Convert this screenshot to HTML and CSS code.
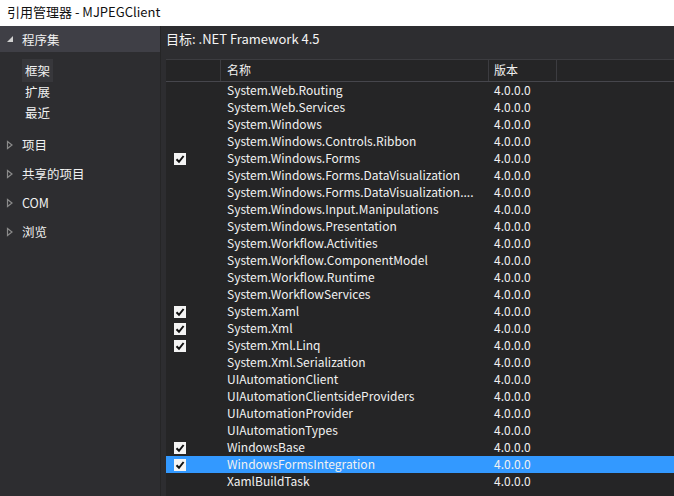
FILE: index.html
```html
<!DOCTYPE html>
<html lang="zh-CN">
<head>
  <meta charset="UTF-8">
  <title>引用管理器 - MJPEGClient</title>
  <link rel="stylesheet" href="styles.css">
</head>
<body>

  <!-- TITLE BAR -->
  <div class="titlebar">引用管理器 - MJPEGClient</div>

  <div class="main">

    <!-- LEFT TREE -->
    <aside class="sidebar">
      <div class="group open">
        <svg class="arrow" width="8" height="8" viewBox="0 0 8 8"><path d="M7 1 L7 7 L1 7 Z" fill="#d0d0d0"/></svg>
        程序集
      </div>
      <ul class="sub">
        <li><span class="current">框架</span></li>
        <li><span>扩展</span></li>
        <li><span>最近</span></li>
      </ul>
      <div class="group">
        <svg class="arrow" width="8" height="10" viewBox="0 0 8 10"><path d="M1.5 1.5 L6 5 L1.5 8.5 Z" fill="none" stroke="#8a8a8a" stroke-width="1.2"/></svg>
        项目
      </div>
      <div class="group">
        <svg class="arrow" width="8" height="10" viewBox="0 0 8 10"><path d="M1.5 1.5 L6 5 L1.5 8.5 Z" fill="none" stroke="#8a8a8a" stroke-width="1.2"/></svg>
        共享的项目
      </div>
      <div class="group">
        <svg class="arrow" width="8" height="10" viewBox="0 0 8 10"><path d="M1.5 1.5 L6 5 L1.5 8.5 Z" fill="none" stroke="#8a8a8a" stroke-width="1.2"/></svg>
        COM
      </div>
      <div class="group">
        <svg class="arrow" width="8" height="10" viewBox="0 0 8 10"><path d="M1.5 1.5 L6 5 L1.5 8.5 Z" fill="none" stroke="#8a8a8a" stroke-width="1.2"/></svg>
        浏览
      </div>
    </aside>

    <!-- REFERENCE LIST -->
    <section class="content">
      <div class="target">目标: .NET Framework 4.5</div>

      <div class="table">
        <div class="row head">
          <div class="cell check"></div>
          <div class="cell name">名称</div>
          <div class="cell ver">版本</div>
          <div class="cell rest"></div>
        </div>
        <div id="rows"></div>
      </div>
    </section>
  </div>

  <script>
    const refs = [
      ["System.Web.Routing", false],
      ["System.Web.Services", false],
      ["System.Windows", false],
      ["System.Windows.Controls.Ribbon", false],
      ["System.Windows.Forms", true],
      ["System.Windows.Forms.DataVisualization", false],
      ["System.Windows.Forms.DataVisualization....", false],
      ["System.Windows.Input.Manipulations", false],
      ["System.Windows.Presentation", false],
      ["System.Workflow.Activities", false],
      ["System.Workflow.ComponentModel", false],
      ["System.Workflow.Runtime", false],
      ["System.WorkflowServices", false],
      ["System.Xaml", true],
      ["System.Xml", true],
      ["System.Xml.Linq", true],
      ["System.Xml.Serialization", false],
      ["UIAutomationClient", false],
      ["UIAutomationClientsideProviders", false],
      ["UIAutomationProvider", false],
      ["UIAutomationTypes", false],
      ["WindowsBase", true],
      ["WindowsFormsIntegration", true],
      ["XamlBuildTask", false]
    ];

    const tick = '<svg width="12" height="12" viewBox="0 0 12 12"><rect width="12" height="12" fill="#f4f4f4"/><path d="M2.5 6.2 L5 8.8 L9.6 3" fill="none" stroke="#111" stroke-width="2"/></svg>';

    const rows = document.getElementById("rows");
    refs.forEach((r) => {
      const row = document.createElement("div");
      row.className = "row" + (r[0] === "WindowsFormsIntegration" ? " selected" : "");
      row.innerHTML =
        '<div class="cell check">' + (r[1] ? tick : "") + '</div>' +
        '<div class="cell name">' + r[0] + '</div>' +
        '<div class="cell ver">4.0.0.0</div>' +
        '<div class="cell rest"></div>';
      rows.appendChild(row);
    });
  </script>
</body>
</html>
```

FILE: styles.css
```css
* {
  box-sizing: border-box;
}

body {
  margin: 0;
  width: 674px;
  height: 496px;
  overflow: hidden;
  font-family: "Noto Sans CJK SC", "Noto Sans", sans-serif;
  background: #2d2d30;
  color: #f1f1f1;
}

/* TITLE BAR */
.titlebar {
  height: 26px;
  line-height: 24px;
  padding-left: 7px;
  background: #ffffff;
  color: #111;
  font-size: 13px;
}

.main {
  display: flex;
  height: 470px;
}

/* LEFT TREE */
.sidebar {
  width: 161px;
  background: #2d2d30;
  border-right: 1px solid #252526;
  font-size: 12.5px;
}

.group {
  display: flex;
  align-items: center;
  height: 29px;
  padding-left: 6px;
  gap: 8px;
}

.group.open {
  height: 26px;
  background: #3f3f46;
}

.sub {
  list-style: none;
  margin: 0;
  padding: 8px 0 7px 22px;
}

.sub li {
  height: 21px;
  line-height: 21px;
}

.sub span {
  padding: 2px 3px;
}

.sub .current {
  background: #37373b;
}

/* RIGHT SIDE */
.content {
  flex: 1;
  display: flex;
  flex-direction: column;
  background: #2d2d30;
}

.target {
  height: 26px;
  line-height: 25px;
  padding-left: 5px;
  font-size: 13px;
  color: #f4f4f4;
}

.table {
  flex: 1;
  margin: 7px 0 0 5px;
  background: #252526;
  border-top: 1px solid #3c3c40;
  font-size: 12px;
}

.row {
  display: grid;
  grid-template-columns: 55px 268px 68px 1fr;
  height: 17px;
  line-height: 16px;
}

.row.head {
  height: 22px;
  line-height: 20px;
  border-bottom: 1px solid #46464c;
}

.row.head .cell {
  border-right: 1px solid #3c3c40;
}

.row.head .rest {
  border-right: none;
}

.cell {
  white-space: nowrap;
  overflow: hidden;
}

.check {
  display: flex;
  align-items: center;
  padding-left: 8px;
}

.name {
  padding-left: 6px;
  padding-right: 4px;
}

.ver {
  padding-left: 5px;
}

.row.selected {
  background: #3399ff;
}
```
